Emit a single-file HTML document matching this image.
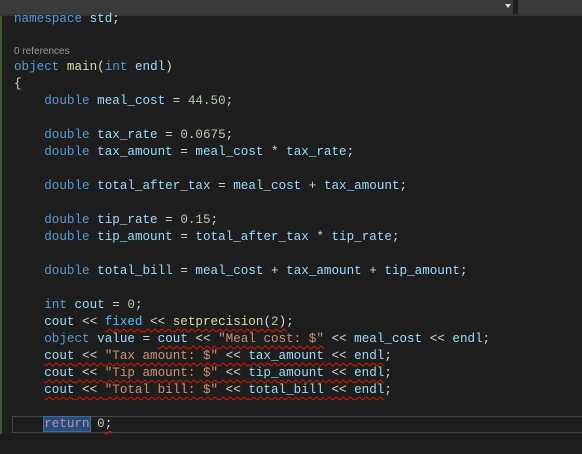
<!DOCTYPE html>
<html><head><style>
html,body{margin:0;padding:0;background:#1e1e1e;width:582px;height:454px;overflow:hidden;position:relative}
.top{position:absolute;left:0;top:0;width:513px;height:14px;background:#3a3a3a}
.top2{position:absolute;left:518px;top:0;width:64px;height:14px;background:#3a3a3a}
.sep{position:absolute;left:0;top:14px;width:582px;height:2px;background:#333}
.arr{position:absolute;left:505px;top:4px;width:0;height:0;border-left:3px solid transparent;border-right:3px solid transparent;border-top:4px solid #ddd}
.green{position:absolute;left:0;top:16px;width:2px;height:418px;background:#3d5a2e}
.l{position:absolute;left:14px;height:17px;line-height:17px;font-family:"Liberation Mono",monospace;font-size:12.6px;color:#d4d4d4;white-space:pre}
.k{color:#569cd6}.v{color:#9cdcfe}.n{color:#b5cea8}.s{color:#ce9178}.f{color:#dcdcaa}.r{color:#c586c0}.c{color:#4fc1ff}
.sq{text-decoration:underline wavy #e51400;text-decoration-thickness:1px;text-underline-offset:3px}
.ref{position:absolute;left:14px;top:46px;font-family:"Liberation Sans",sans-serif;font-size:10px;color:#999}
.cur{position:absolute;left:12px;top:416px;width:580px;height:15px;border:1px solid #464646}
.sel{background:#264f78;outline:1px solid #3f6a9a}
</style></head><body>
<div class="top"></div><div class="top2"></div><div class="arr"></div><div class="sep"></div>
<div class="green"></div>
<div class="l" style="top:11px"><span class="k">namespace</span> <span class="v">std</span>;</div>
<div class="ref">0 references</div>
<div class="l" style="top:59px"><span class="k">object</span> <span class="f">main</span>(<span class="k">int</span> <span class="v">endl</span>)</div>
<div class="l" style="top:76px">{</div>
<div class="l" style="top:93px">    <span class="k">double</span> <span class="v">meal_cost</span> = <span class="n">44.50</span>;</div>
<div class="l" style="top:127px">    <span class="k">double</span> <span class="v">tax_rate</span> = <span class="n">0.0675</span>;</div>
<div class="l" style="top:144px">    <span class="k">double</span> <span class="v">tax_amount</span> = <span class="v">meal_cost</span> * <span class="v">tax_rate</span>;</div>
<div class="l" style="top:178px">    <span class="k">double</span> <span class="v">total_after_tax</span> = <span class="v">meal_cost</span> + <span class="v">tax_amount</span>;</div>
<div class="l" style="top:212px">    <span class="k">double</span> <span class="v">tip_rate</span> = <span class="n">0.15</span>;</div>
<div class="l" style="top:229px">    <span class="k">double</span> <span class="v">tip_amount</span> = <span class="v">total_after_tax</span> * <span class="v">tip_rate</span>;</div>
<div class="l" style="top:263px">    <span class="k">double</span> <span class="v">total_bill</span> = <span class="v">meal_cost</span> + <span class="v">tax_amount</span> + <span class="v">tip_amount</span>;</div>
<div class="l" style="top:297px">    <span class="k">int</span> <span class="v">cout</span> = <span class="n">0</span>;</div>
<div class="l" style="top:314px">    <span class="v">cout</span> &lt;&lt; <span class="sq"><span class="c">fixed</span> &lt;&lt; <span class="f">setprecision</span>(<span class="n">2</span>)</span>;</div>
<div class="l" style="top:331px">    <span class="k">object</span> <span class="v">value</span> = <span class="sq"><span class="v">cout</span> &lt;&lt; <span class="s">"Meal cost: $"</span></span> &lt;&lt; <span class="v">meal_cost</span> &lt;&lt; <span class="v">endl</span>;</div>
<div class="l" style="top:348px">    <span class="sq"><span class="v">cout</span> &lt;&lt; <span class="s">"Tax amount: $"</span> &lt;&lt; <span class="v">tax_amount</span> &lt;&lt; <span class="v">endl</span></span>;</div>
<div class="l" style="top:365px">    <span class="sq"><span class="v">cout</span> &lt;&lt; <span class="s">"Tip amount: $"</span> &lt;&lt; <span class="v">tip_amount</span> &lt;&lt; <span class="v">endl</span></span>;</div>
<div class="l" style="top:382px">    <span class="sq"><span class="v">cout</span> &lt;&lt; <span class="s">"Total bill: $"</span> &lt;&lt; <span class="v">total_bill</span> &lt;&lt; <span class="v">endl</span></span>;</div>
<div class="cur"></div>
<div class="l" style="top:416px">    <span class="r sel">return</span> <span class="n">0</span><span class="sq">;</span></div>
</body></html>
